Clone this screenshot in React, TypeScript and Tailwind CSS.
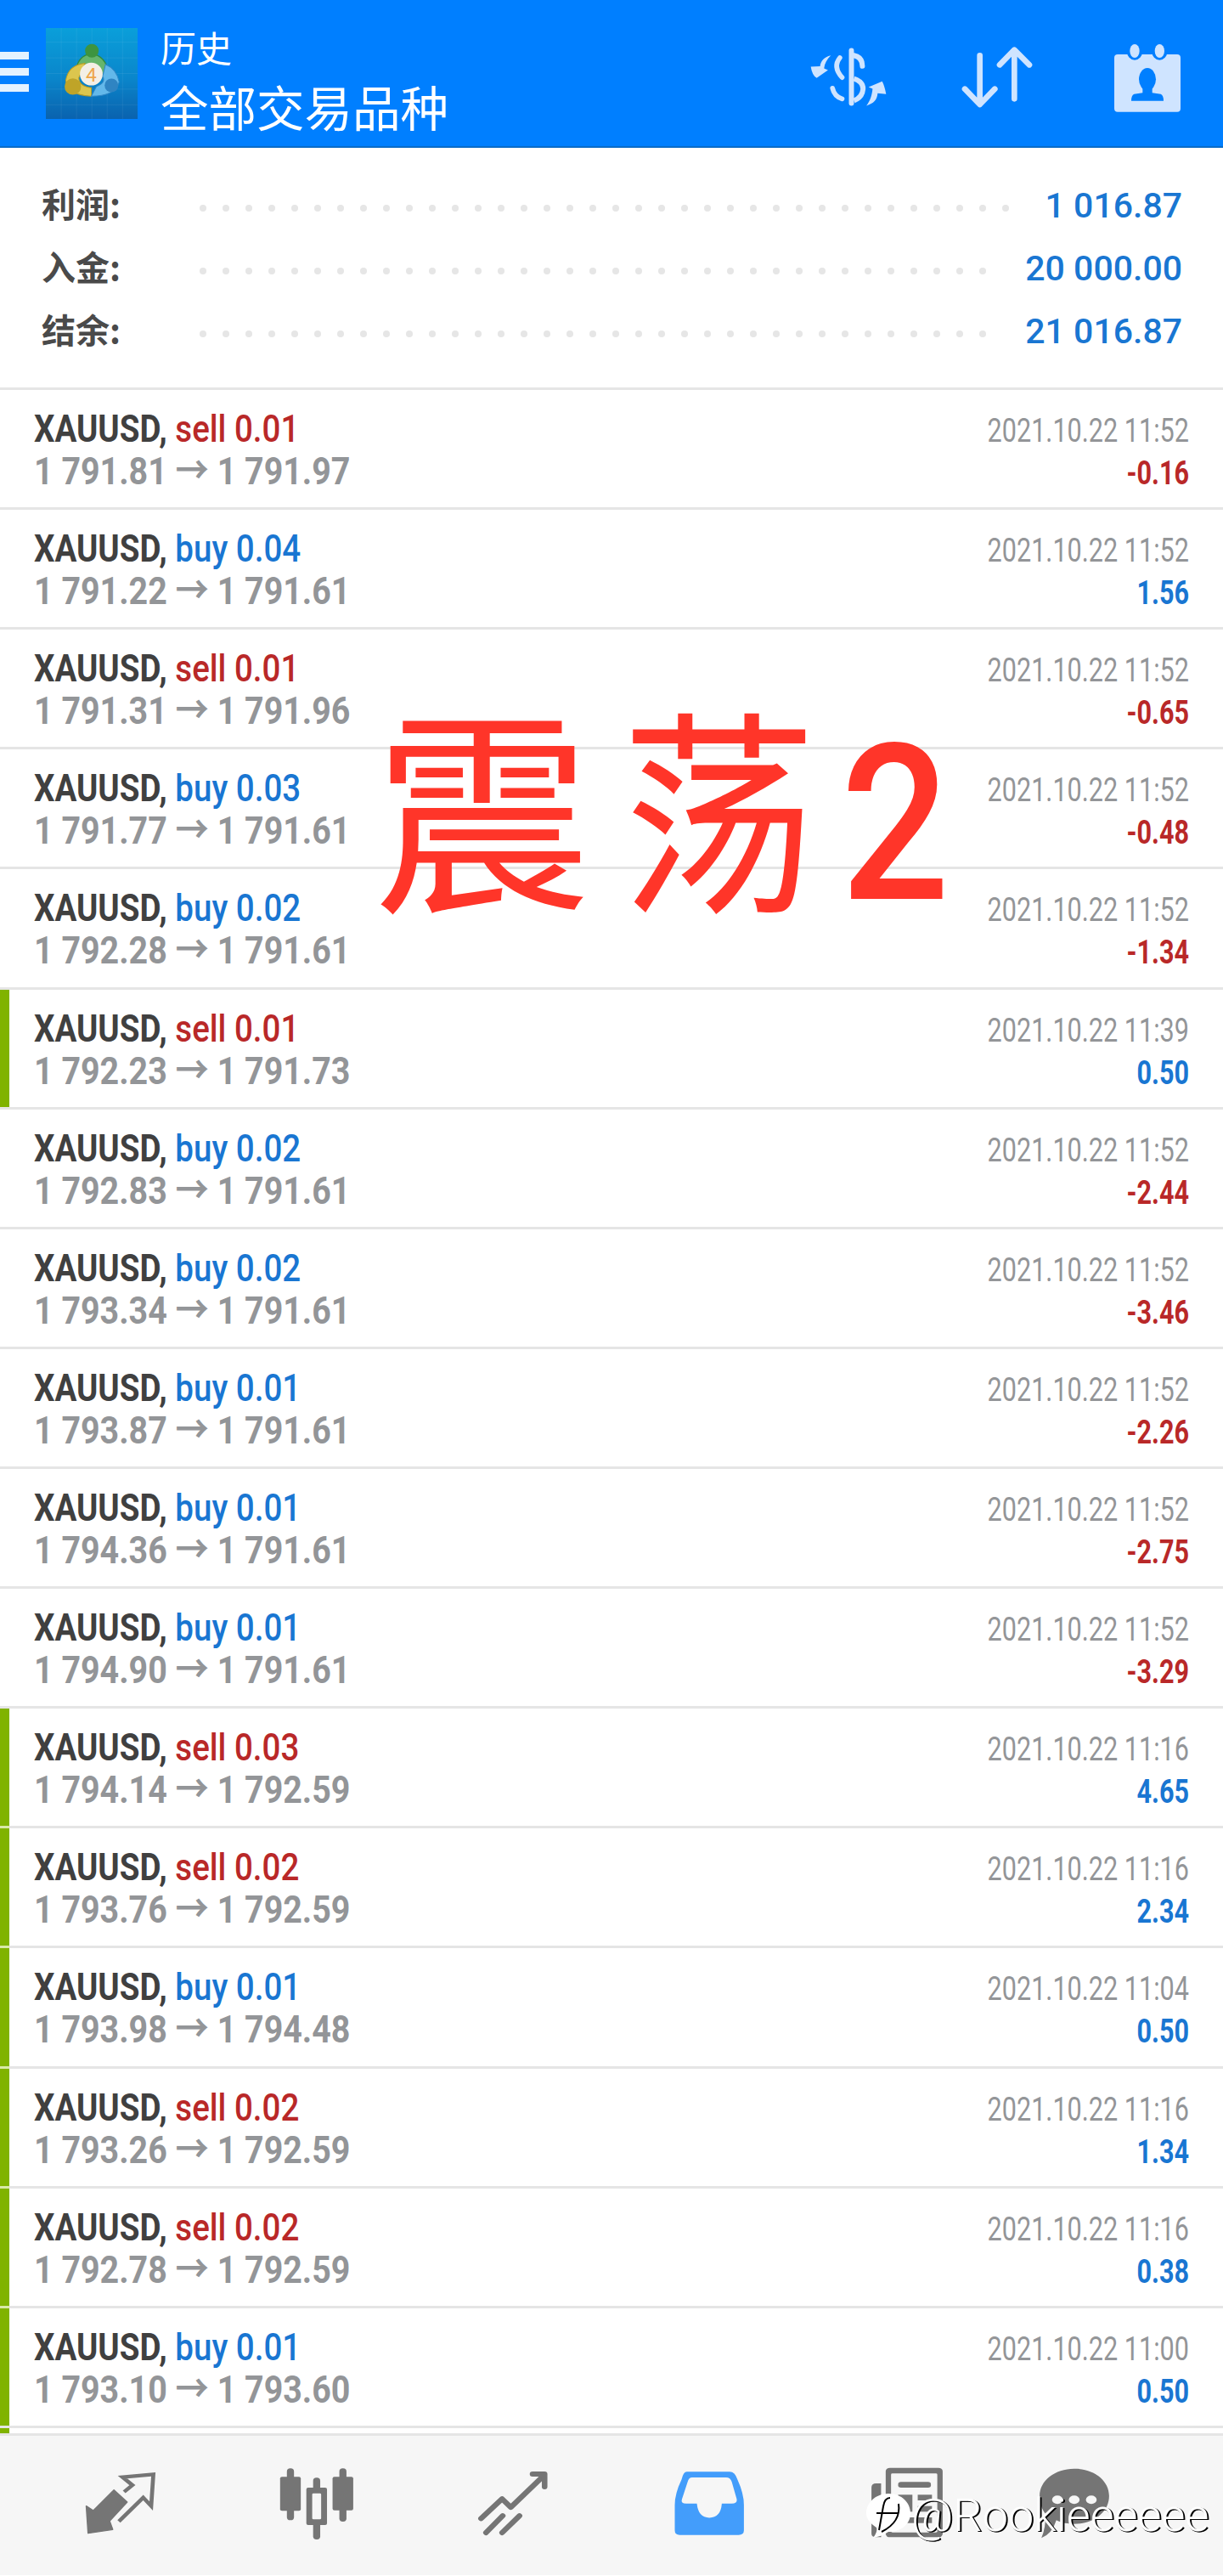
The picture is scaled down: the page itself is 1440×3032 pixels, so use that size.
import React from "react";

const ROBOTO = "font-['Roboto','Noto_Sans_CJK_SC',sans-serif]";

type Row = { side: "buy" | "sell"; lot: string; from: string; to: string; time: string; profit: string; green?: boolean };

const rows: Row[] = [
  { side: "sell", lot: "0.01", from: "1 791.81", to: "1 791.97", time: "11:52", profit: "-0.16" },
  { side: "buy", lot: "0.04", from: "1 791.22", to: "1 791.61", time: "11:52", profit: "1.56" },
  { side: "sell", lot: "0.01", from: "1 791.31", to: "1 791.96", time: "11:52", profit: "-0.65" },
  { side: "buy", lot: "0.03", from: "1 791.77", to: "1 791.61", time: "11:52", profit: "-0.48" },
  { side: "buy", lot: "0.02", from: "1 792.28", to: "1 791.61", time: "11:52", profit: "-1.34" },
  { side: "sell", lot: "0.01", from: "1 792.23", to: "1 791.73", time: "11:39", profit: "0.50", green: true },
  { side: "buy", lot: "0.02", from: "1 792.83", to: "1 791.61", time: "11:52", profit: "-2.44" },
  { side: "buy", lot: "0.02", from: "1 793.34", to: "1 791.61", time: "11:52", profit: "-3.46" },
  { side: "buy", lot: "0.01", from: "1 793.87", to: "1 791.61", time: "11:52", profit: "-2.26" },
  { side: "buy", lot: "0.01", from: "1 794.36", to: "1 791.61", time: "11:52", profit: "-2.75" },
  { side: "buy", lot: "0.01", from: "1 794.90", to: "1 791.61", time: "11:52", profit: "-3.29" },
  { side: "sell", lot: "0.03", from: "1 794.14", to: "1 792.59", time: "11:16", profit: "4.65", green: true },
  { side: "sell", lot: "0.02", from: "1 793.76", to: "1 792.59", time: "11:16", profit: "2.34", green: true },
  { side: "buy", lot: "0.01", from: "1 793.98", to: "1 794.48", time: "11:04", profit: "0.50", green: true },
  { side: "sell", lot: "0.02", from: "1 793.26", to: "1 792.59", time: "11:16", profit: "1.34", green: true },
  { side: "sell", lot: "0.02", from: "1 792.78", to: "1 792.59", time: "11:16", profit: "0.38", green: true },
  { side: "buy", lot: "0.01", from: "1 793.10", to: "1 793.60", time: "11:00", profit: "0.50", green: true },
];

function Logo() {
  const grid = [216, 270, 324, 378, 432];
  const gridY = [80, 135, 190, 245, 300];
  return (
    <svg viewBox="162 30 323 320" preserveAspectRatio="none" className="ml-[20px] h-[107px] w-[108px] shrink-0">
      <defs>
        <linearGradient id="mtbg" x1="0" y1="0" x2="0" y2="1">
          <stop offset="0" stopColor="#0a9fda" />
          <stop offset="0.55" stopColor="#0a86cb" />
          <stop offset="1" stopColor="#0a62ae" />
        </linearGradient>
      </defs>
      <rect x="162" y="30" width="323" height="320" fill="url(#mtbg)" />
      {grid.map((x) => (
        <line key={x} x1={x} x2={x} y1="30" y2="350" stroke="#ffffff" strokeOpacity="0.1" strokeWidth="2" />
      ))}
      {gridY.map((y) => (
        <line key={y} y1={y} y2={y} x1="162" x2="485" stroke="#ffffff" strokeOpacity="0.1" strokeWidth="2" />
      ))}
      <path d="M266 190 Q272 126 322 120 Q372 126 384 190 Z" fill="#66b56c" stroke="#2f8a3f" strokeWidth="4" />
      <circle cx="324" cy="110" r="24" fill="#3d9440" />
      <path d="M300 154 Q240 160 232 215 Q240 266 322 270 L322 240 Q278 235 278 205 Z" fill="#dcc64e" stroke="#b89c24" strokeWidth="3" />
      <circle cx="257" cy="236" r="29" fill="#bfa428" />
      <path d="M322 270 Q405 270 420 220 Q412 175 372 158 L362 200 Q375 222 340 236 Z" fill="#63b8ea" stroke="#2f86c6" strokeWidth="3" />
      <circle cx="393" cy="232" r="24" fill="#2f84c2" />
      <circle cx="322" cy="192" r="40" fill="#f4efe6" />
      <text x="322" y="217" textAnchor="middle" fontSize="68" fontFamily="Roboto" fill="#eea64a">4</text>
    </svg>
  );
}

function HeaderIcons() {
  const c = "#cfe4ff";
  return (
    <>
      <svg viewBox="40 48 280 215" className="ml-auto h-[72px] w-[93px] shrink-0 translate-y-[5px]">
        <rect x="180" y="52" width="18" height="204" rx="9" fill={c} />
        <path d="M198 78 Q228 84 228 116" fill="none" stroke={c} strokeWidth="18" strokeLinecap="round" />
        <path d="M148 86 Q122 118 156 156" fill="none" stroke={c} strokeWidth="17" strokeLinecap="round" />
        <path d="M122 194 Q128 222 156 232" fill="none" stroke={c} strokeWidth="17" strokeLinecap="round" />
        <path d="M198 160 Q232 172 230 198 Q228 226 198 238" fill="none" stroke={c} strokeWidth="18" />
        <path d="M116 78 C92 84 80 98 78 116 L45 118 Q50 150 66 158 L106 130 L92 124 C94 106 102 92 116 78 Z" fill={c} />
        <path d="M242 256 C268 248 280 236 282 212 L312 215 Q306 185 298 170 L250 190 L264 196 C262 218 256 238 242 256 Z" fill={c} />
      </svg>
      <svg viewBox="580 48 255 222" className="ml-[86px] h-[74px] w-[85px] shrink-0 translate-y-[5px]">
        <g fill="none" stroke={c} strokeWidth="20" strokeLinecap="round" strokeLinejoin="round">
          <path d="M645 82 V250 M592 200 L645 255 L698 200" />
          <path d="M767 235 V65 M715 115 L767 62 L820 115" />
        </g>
      </svg>
      <svg viewBox="1118 36 234 240" className="ml-[95px] mr-[50px] h-[80px] w-[78px] shrink-0 translate-y-[6px]">
        <rect x="1118" y="72" width="234" height="203" rx="12" fill={c} />
        <ellipse cx="1190" cy="62" rx="27" ry="30" fill="#007fff" />
        <ellipse cx="1278" cy="62" rx="27" ry="30" fill="#007fff" />
        <ellipse cx="1190" cy="60" rx="17" ry="24" fill={c} />
        <ellipse cx="1278" cy="60" rx="17" ry="24" fill={c} />
        <ellipse cx="1235" cy="160" rx="30" ry="40" fill="#007fff" />
        <path d="M1218 190 H1252 V208 L1282 212 Q1292 216 1292 236 H1178 Q1178 216 1188 212 L1218 208 Z" fill="#007fff" />
      </svg>
    </>
  );
}

function Summary({ label, value, dots }: { label: string; value: string; dots: number }) {
  return (
    <div className="flex h-[74px] items-center pl-[49px] pr-[48px]">
      <span className="w-[186px] shrink-0 -translate-y-[6px] text-[40px] font-bold leading-[74px] text-[#4a4a4a] font-['Noto_Sans_CJK_SC',sans-serif]">
        {label}
      </span>
      <span className="flex gap-[19px]">
        {Array.from({ length: dots }).map((_, i) => (
          <span key={i} className="h-[8px] w-[8px] rounded-full bg-[#e6e6e6]" />
        ))}
      </span>
      <span className={`ml-auto -translate-y-[3px] text-[41px] font-medium leading-[74px] text-[#1976d2] ${ROBOTO}`}>{value}</span>
    </div>
  );
}

function TradeRow({ row, nextGreen }: { row: Row; nextGreen: boolean }) {
  const positive = !row.profit.startsWith("-");
  return (
    <div className={`relative flex h-[141.12px] justify-between border-b-[3px] border-[#e5e5e5] pl-[40px] pr-[40px] ${ROBOTO}`}>
      {row.green && <span className="absolute bottom-0 left-0 top-0 w-[11px] bg-[#80b300]" />}
      {row.green && nextGreen && <span className="absolute bottom-[-3px] left-0 h-[3px] w-[11px] bg-[#d9e9a8]" />}
      <div className="flex w-[500px] shrink-0 origin-left scale-x-[0.875] flex-col pt-[21px]">
        <div className="whitespace-pre text-[44px] leading-[50px]">
          <span className="font-bold text-[#404040]">XAUUSD, </span>
          <span className={`font-medium ${row.side === "buy" ? "text-[#1976d2]" : "text-[#b92828]"}`}>{row.side} {row.lot}</span>
        </div>
        <div className="whitespace-pre text-[45px] font-bold leading-[50px] text-[#939598]">
          {row.from} → {row.to}
        </div>
      </div>
      <div className="flex w-[400px] shrink-0 origin-right scale-x-[0.805] flex-col items-end pt-[23px]">
        <div className="text-[38px] leading-[50px] text-[#939598]">2021.10.22 {row.time}</div>
        <div className={`text-[38px] font-bold leading-[50px] ${positive ? "text-[#1976d2]" : "text-[#b92828]"}`}>{row.profit}</div>
      </div>
    </div>
  );
}

function BottomNav() {
  const g = "#757575";
  return (
    <div className="flex h-[167px] shrink-0 items-center border-t-[3px] border-[#e5e5e5] bg-[#f6f6f6] pb-[4px]">
      <svg viewBox="25 50 240 225" preserveAspectRatio="none" className="ml-[99px] h-[75px] w-[87px] shrink-0">
        <path d="M122 115 L165 158 L108 225 L118 255 L38 268 L32 172 L55 188 Z" fill={g} stroke={g} strokeWidth="4" strokeLinejoin="round" />
        <path d="M155 122 L182 98 L150 70 L250 60 L243 172 L217 142 L138 226" fill="none" stroke={g} strokeWidth="13" />
      </svg>
      <svg viewBox="655 28 245 258" preserveAspectRatio="none" className="ml-[142px] h-[86px] w-[89px] shrink-0">
        <rect x="682" y="32" width="23" height="183" rx="11" fill={g} />
        <rect x="660" y="62" width="67" height="120" rx="6" fill={g} />
        <rect x="852" y="32" width="23" height="188" rx="11" fill={g} />
        <rect x="830" y="62" width="67" height="118" rx="6" fill={g} />
        <rect x="767" y="65" width="23" height="218" rx="11" fill={g} />
        <rect x="745" y="100" width="67" height="132" rx="6" fill={g} />
        <rect x="764" y="120" width="29" height="92" rx="4" fill="#f6f6f6" />
      </svg>
      <svg viewBox="1300 38 230 232" preserveAspectRatio="none" className="ml-[145px] h-[77px] w-[84px] shrink-0">
        <g fill="none" stroke={g} strokeWidth="18" strokeLinecap="round" strokeLinejoin="round">
          <path d="M1312 208 L1380 138 L1408 168 L1512 58" />
          <path d="M1478 50 H1517 V95" />
          <path d="M1328 258 L1382 198 M1380 258 L1436 198" />
        </g>
      </svg>
      <svg viewBox="30 38 205 232" preserveAspectRatio="none" className="ml-[146px] h-[77px] w-[86px] shrink-0">
        <path d="M70 42 H190 Q205 42 212 70 Q230 120 230 160 V250 Q230 266 215 266 H50 Q36 266 36 250 V160 Q36 120 55 70 Q60 42 70 42 Z" fill="#439dfb" />
        <path d="M85 62 H180 Q192 62 196 78 L210 140 Q212 155 195 155 H168 Q165 205 133 205 Q102 205 98 155 H68 Q52 155 56 140 L72 78 Q75 62 85 62 Z" fill="#f6f6f6" />
      </svg>
      <svg viewBox="580 28 210 255" preserveAspectRatio="none" className="ml-[146px] h-[85px] w-[88px] shrink-0">
        <path d="M612 85 H598 Q585 85 585 100 V262 Q585 275 598 275 H612 Z" fill={g} />
        <rect x="625" y="30" width="160" height="245" rx="12" fill={g} />
        <rect x="640" y="50" width="130" height="208" rx="4" fill="#f6f6f6" />
        <rect x="660" y="80" width="92" height="20" rx="8" fill={g} />
        <rect x="660" y="125" width="40" height="60" fill={g} />
        <rect x="715" y="125" width="40" height="20" fill={g} />
        <rect x="715" y="165" width="40" height="20" fill={g} />
        <rect x="660" y="205" width="95" height="20" fill={g} />
      </svg>
      <svg viewBox="1050 28 205 252" preserveAspectRatio="none" className="ml-[110px] h-[84px] w-[86px] shrink-0">
        <path d="M1152 30 C1208 30 1250 72 1250 126 C1250 182 1208 225 1152 225 C1132 225 1118 222 1102 212 Q1090 260 1060 275 Q1072 240 1072 190 C1060 172 1055 150 1055 126 C1055 72 1098 30 1152 30 Z" fill={g} />
        <circle cx="1105" cy="140" r="15" fill="#f6f6f6" />
        <circle cx="1152" cy="140" r="15" fill="#f6f6f6" />
        <circle cx="1200" cy="140" r="15" fill="#f6f6f6" />
      </svg>
    </div>
  );
}

export default function App() {
  return (
    <div className="relative flex h-[3032px] w-[1440px] flex-col overflow-hidden bg-white">
      <header className="flex h-[174px] shrink-0 items-center border-b-[2px] border-[#0a6cc8] bg-[#007fff]">
        <div className="mt-[-4px] flex w-[34px] shrink-0 flex-col gap-[10px]">
          <span className="h-[9px] bg-[#e3f2ff]" />
          <span className="h-[9px] bg-[#e3f2ff]" />
          <span className="h-[9px] bg-[#e3f2ff]" />
        </div>
        <Logo />
        <div className="ml-[27px] mt-[25px] flex flex-col self-start text-white font-['Noto_Sans_CJK_SC',sans-serif]">
          <span className="h-[60px] text-[42px] leading-[60px]">历史</span>
          <span className="h-[78px] text-[56.5px] leading-[78px]">全部交易品种</span>
        </div>
        <HeaderIcons />
      </header>

      <section className="h-[285px] shrink-0 border-b-[3px] border-[#e5e5e5] pt-[34px]">
        <Summary label="利润:" value="1 016.87" dots={36} />
        <Summary label="入金:" value="20 000.00" dots={35} />
        <Summary label="结余:" value="21 016.87" dots={35} />
      </section>

      <main className="shrink-0">
        {rows.map((r, i) => (
          <TradeRow key={i} row={r} nextGreen={!!rows[i + 1]?.green} />
        ))}
      </main>
      <div className="relative h-[6px] shrink-0">
        <span className="absolute inset-y-0 left-0 w-[11px] bg-[#80b300]" />
      </div>
      <BottomNav />

      {/* Red annotation written over the list */}
      <div className="absolute left-[440px] top-[803px] flex items-center whitespace-pre text-[#ff3529]">
        <span className="text-[256px] leading-[280px] font-['Noto_Sans_CJK_SC',sans-serif]">震</span>
        <span className="ml-[36px] w-[232px] origin-left scale-x-[0.9] text-[254px] leading-[280px] font-['Noto_Sans_CJK_SC',sans-serif]">荡</span>
        <span className="ml-[26px] origin-left translate-y-[28px] scale-x-[0.88] text-[256px] font-medium leading-[280px] font-['Roboto',sans-serif]">2</span>
      </div>

      {/* Watermark */}
      <div className="absolute left-[1018px] top-[2931px] flex items-center">
        <svg viewBox="0 0 55 54" className="h-[54px] w-[55px] shrink-0">
          <path d="M28 1 C44 1 54 12 54 24 C54 38 42 46 28 46 C22 50 16 52 10 53 C14 48 15 44 14 41 C6 36 2 30 2 24 C2 12 13 1 28 1 Z" fill="#ffffff" />
          <path d="M30 6 C25 6 23 10 22 16 L17 44 M14 24 H40 M40 13 C42 26 36 38 20 46" fill="none" stroke="#000000" strokeWidth="2" />
        </svg>
        <span className="text-[54px] font-light leading-[60px] text-white [text-shadow:1px_1px_0_#000,2px_1px_0_#000] font-['Roboto',sans-serif]">@Rookieeeeee</span>
      </div>
    </div>
  );
}
